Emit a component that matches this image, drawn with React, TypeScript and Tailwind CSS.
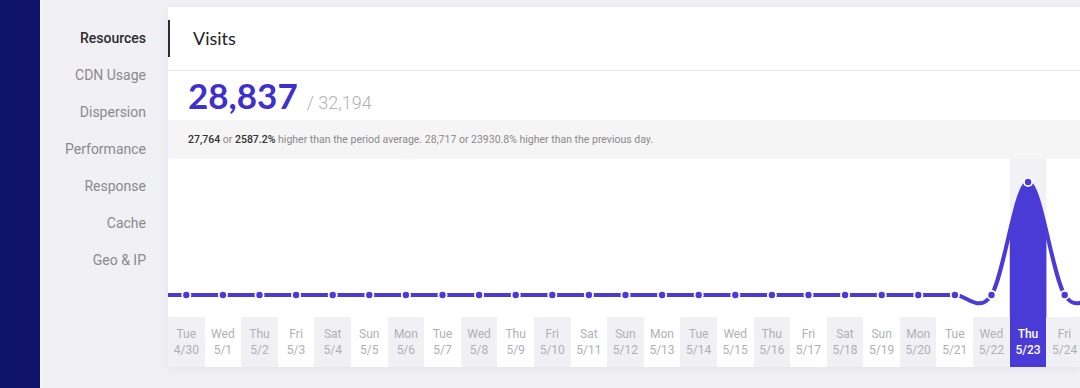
import React from 'react';

const PURPLE = '#4a3ad6';

const days = [
  ['Tue', '4/30'], ['Wed', '5/1'], ['Thu', '5/2'], ['Fri', '5/3'], ['Sat', '5/4'],
  ['Sun', '5/5'], ['Mon', '5/6'], ['Tue', '5/7'], ['Wed', '5/8'], ['Thu', '5/9'],
  ['Fri', '5/10'], ['Sat', '5/11'], ['Sun', '5/12'], ['Mon', '5/13'], ['Tue', '5/14'],
  ['Wed', '5/15'], ['Thu', '5/16'], ['Fri', '5/17'], ['Sat', '5/18'], ['Sun', '5/19'],
  ['Mon', '5/20'], ['Tue', '5/21'], ['Wed', '5/22'], ['Thu', '5/23'], ['Fri', '5/24'],
];

const ACTIVE = 23;
const COL = 36.6;
const CHART_H = 158;
const BASE = 136;
const PEAK = 23;

const navItems = ['Resources', 'CDN Usage', 'Dispersion', 'Performance', 'Response', 'Cache', 'Geo & IP'];

// points from one day before to one day after the visible range
const points = Array.from({ length: days.length + 3 }, (_, k) => {
  const i = k - 1;
  return { x: COL / 2 + COL * i, y: i === ACTIVE ? PEAK : BASE };
});

// cardinal spline (catmull-rom style) through the points
const curvePath = () => {
  let d = `M${points[0].x},${points[0].y}`;
  for (let i = 0; i < points.length - 1; i++) {
    const p0 = points[Math.max(0, i - 1)];
    const p1 = points[i];
    const p2 = points[i + 1];
    const p3 = points[Math.min(points.length - 1, i + 2)];
    const c1x = p1.x + (p2.x - p0.x) / 6;
    const c1y = p1.y + (p2.y - p0.y) / 6;
    const c2x = p2.x - (p3.x - p1.x) / 6;
    const c2y = p2.y - (p3.y - p1.y) / 6;
    d += ` C${c1x},${c1y} ${c2x},${c2y} ${p2.x},${p2.y}`;
  }
  return d;
};

const Chart = () => {
  const line = curvePath();
  const last = points[points.length - 1];
  const area = `${line} L${last.x},${CHART_H} L${points[0].x},${CHART_H} Z`;
  const colX = COL * ACTIVE;
  const width = COL * days.length;

  return (
    <svg width={width} height={CHART_H} className="block">
      <defs>
        <clipPath id="activeCol">
          <rect x={colX} y={0} width={COL} height={CHART_H} />
        </clipPath>
      </defs>
      <rect x={colX} y={0} width={COL} height={CHART_H} fill="#f1f1f6" />
      <path d={area} fill={PURPLE} clipPath="url(#activeCol)" />
      <path d={line} fill="none" stroke={PURPLE} strokeWidth={4} />
      {points.slice(1, days.length + 1).map((p, i) => (
        <g key={i}>
          <circle cx={p.x} cy={p.y} r={5} fill="#fff" />
          <circle cx={p.x} cy={p.y} r={3.2} fill={PURPLE} />
        </g>
      ))}
    </svg>
  );
};

export default function App() {
  return (
    <div className="w-[1080px] h-[388px] flex bg-[#f0f0f5] overflow-hidden font-['Roboto',sans-serif]">
      {/* Dark rail */}
      <div className="w-[42px] shrink-0 bg-[#0e1268] border-r-2 border-[#f8f8fb]" />

      {/* Sub navigation */}
      <nav className="w-[124px] shrink-0 flex flex-col items-end pr-[20px] pt-[20px]">
        {navItems.map((item, i) => (
          <div
            key={item}
            className={`h-[37px] leading-[37px] text-[14px] ${i === 0 ? 'text-[#2d2d2d] font-medium' : 'text-[#8a8a8f]'}`}
          >
            {item}
          </div>
        ))}
      </nav>

      {/* Card */}
      <div className="ml-[2px] mt-[7px] w-[915px] shrink-0 self-start bg-white shadow-[0_2px_10px_rgba(40,40,80,0.06)]">
        <div className="h-[64px] flex items-center border-b border-[#e9e9ec] relative">
          <div className="absolute left-0 top-[13px] h-[37px] w-[2px] bg-[#2b2b2b]" />
          <h2 className="pl-[25px] text-[18px] text-[#222] font-['Lato',sans-serif]">Visits</h2>
        </div>

        <div className="h-[49px] flex items-baseline pl-[20px] pt-[2px]">
          <span className="text-[35px] leading-[45px] font-bold text-[#3f2fcb] font-['Lato',sans-serif]">28,837</span>
          <span className="ml-[9px] text-[18px] text-[#b0b0b4] font-light">/ 32,194</span>
        </div>

        <div className="h-[39px] bg-[#f5f5f5] flex items-center pl-[20px] text-[10.5px] text-[#8a8a8a]">
          <span>
            <span className="text-[#333] font-medium">27,764</span> or{' '}
            <span className="text-[#333] font-medium">2587.2%</span> higher than the period average. 28,717 or 23930.8% higher than the previous day.
          </span>
        </div>

        <Chart />

        <div className="flex h-[50px]">
          {days.map(([d, date], i) => (
            <div
              key={date}
              className={`w-[36.6px] shrink-0 flex flex-col items-center justify-center text-[12px] leading-[16px] ${
                i === ACTIVE
                  ? 'bg-[#4a3ad6] text-white font-medium'
                  : i % 2 === 1
                  ? 'bg-white text-[#b0b0b5]'
                  : 'bg-[#f1f1f5] text-[#b0b0b5]'
              }`}
            >
              <span>{d}</span>
              <span>{date}</span>
            </div>
          ))}
        </div>
      </div>
    </div>
  );
}
